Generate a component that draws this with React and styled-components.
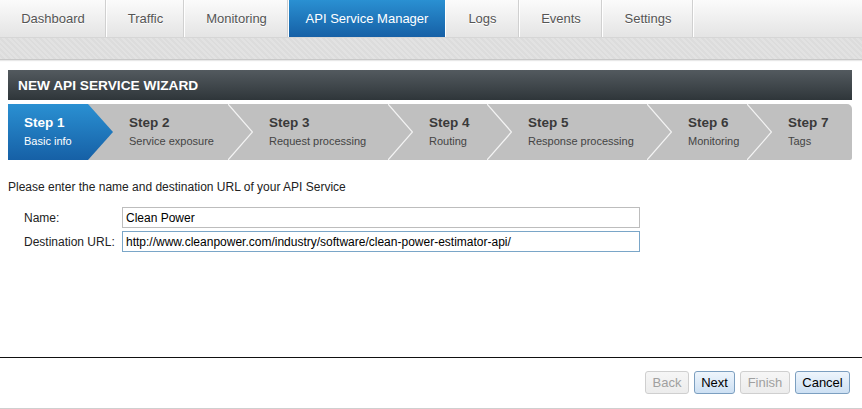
import React from "react";
import styled, { createGlobalStyle } from "styled-components";

const GlobalStyle = createGlobalStyle`
  html, body { margin: 0; padding: 0; background: #fff; }
  body { font-family: "Liberation Sans", Arial, sans-serif; font-size: 12px; color: #222; }
`;

const tabs = [
    { label: "Dashboard", width: 107 },
    { label: "Traffic", width: 78 },
    { label: "Monitoring", width: 104 },
    { label: "API Service Manager", width: 157 },
    { label: "Logs", width: 74 },
    { label: "Events", width: 83 },
    { label: "Settings", width: 91 },
];

const steps = [
    { title: "Step 1", sub: "Basic info", width: 105 },
    { title: "Step 2", sub: "Service exposure", width: 140 },
    { title: "Step 3", sub: "Request processing", width: 160 },
    { title: "Step 4", sub: "Routing", width: 99 },
    { title: "Step 5", sub: "Response processing", width: 160 },
    { title: "Step 6", sub: "Monitoring", width: 100 },
    { title: "Step 7", sub: "Tags", width: 0 },
];

const buttons = [
    { label: "Back", disabled: true, width: 44 },
    { label: "Next", disabled: false, width: 41 },
    { label: "Finish", disabled: true, width: 50 },
    { label: "Cancel", disabled: false, width: 55 },
];

const Chevron = () => (
    <ChevronSvg viewBox="0 0 25 56" preserveAspectRatio="none">
        <polyline points="0,0 24.5,28 0,56" fill="none" stroke="#f4f4f4" strokeWidth="1.2" />
    </ChevronSvg>
);

const App = () => {
    return (
        <Page>
            <GlobalStyle />
            <TabBar>
                {tabs.map((t) => (
                    <Tab key={t.label} w={t.width} active={t.label === "API Service Manager"}>{t.label}</Tab>
                ))}
                <TabFill />
            </TabBar>
            <Band />
            <Main>
                <WizardHeader>NEW API SERVICE WIZARD</WizardHeader>
                <Steps>
                    {steps.map((s, i) => (
                        <Step key={s.title} active={i === 0} w={s.width}>
                            <StepTitle active={i === 0}>{s.title}</StepTitle>
                            <StepSub active={i === 0}>{s.sub}</StepSub>
                            {i > 0 && i < steps.length - 1 && <Chevron />}
                        </Step>
                    ))}
                </Steps>
                <Intro>Please enter the name and destination URL of your API Service</Intro>
                <Form>
                    <Label>Name:</Label>
                    <Field defaultValue="Clean Power" />
                    <Label>Destination URL:</Label>
                    <Field focused defaultValue="http://www.cleanpower.com/industry/software/clean-power-estimator-api/" />
                </Form>
            </Main>
            <Footer>
                {buttons.map((b) => (
                    <Button key={b.label} disabled={b.disabled} w={b.width}>{b.label}</Button>
                ))}
            </Footer>
        </Page>
    );
}

export default App;


const Page = styled.div`
    min-height:409px;
    display:flex;
    flex-direction:column;
`

const TabBar = styled.div`
    display:flex;
    height:38px;
    background:linear-gradient(#fbfbfb, #e4e4e4);
    border-bottom:1px solid #d6d6d6;
    box-sizing:border-box;
`

const Tab = styled.div`
    box-sizing:border-box;
    width:${p => p.w}px;
    display:flex;
    align-items:center;
    justify-content:center;
    font-size:13px;
    color:${p => p.active ? "#fff" : "#555"};
    text-shadow:${p => p.active ? "none" : "0 1px 0 #fff"};
    background:${p => p.active ? "linear-gradient(#2a90d2, #1660a6)" : "transparent"};
    border-right:1px solid #fff;
    box-shadow:${p => p.active ? "none" : "inset -1px 0 0 #d0d0d0"};
    white-space:nowrap;
`

const TabFill = styled.div`
    flex:1;
`

const Band = styled.div`
    height:21px;
    background:repeating-linear-gradient(45deg, #e2e2e2 0 2px, #dcdcdc 2px 4px);
    border-bottom:1px solid #c8c8c8;
    box-shadow:0 1px 1px #e8e8e8;
`

const Main = styled.div`
    flex:1;
    padding:10px 10px 0 8px;
`

const WizardHeader = styled.div`
    height:30px;
    display:flex;
    align-items:center;
    padding-left:10px;
    background:linear-gradient(#535a5f, #2f363a);
    color:#fff;
    font-weight:bold;
    font-size:13.7px;
`

const Steps = styled.div`
    margin-top:4px;
    height:56px;
    display:flex;
    background:#c0c0c0;
    border-top-right-radius:5px;
    border-bottom-right-radius:2px;
`

const Step = styled.div`
    position:relative;
    box-sizing:border-box;
    ${p => p.w ? `width:${p.w}px;` : "flex:1;"}
    display:flex;
    flex-direction:column;
    justify-content:center;
    padding-left:16px;
    padding-bottom:2px;
    background:${p => p.active ? "linear-gradient(#2a90d2, #1660a6)" : "transparent"};
    clip-path:${p => p.active ? "polygon(0 0, calc(100% - 25px) 0, 100% 50%, calc(100% - 25px) 100%, 0 100%)" : "none"};
`

const ChevronSvg = styled.svg`
    position:absolute;
    right:0;
    top:0;
    width:25px;
    height:100%;
`

const StepTitle = styled.div`
    font-size:13.5px;
    font-weight:bold;
    line-height:20px;
    color:${p => p.active ? "#fff" : "#3a3a3a"};
`

const StepSub = styled.div`
    font-size:11px;
    line-height:16px;
    color:${p => p.active ? "#fff" : "#444"};
    white-space:nowrap;
`

const Intro = styled.p`
    margin:20px 0 13px;
    font-size:12px;
    color:#222;
`

const Form = styled.div`
    display:grid;
    grid-template-columns:98px 518px;
    row-gap:3px;
    padding-left:16px;
    align-items:center;
`

const Label = styled.label`
    font-size:12px;
    color:#222;
`

const Field = styled.input`
    box-sizing:border-box;
    height:21px;
    padding:0 3px;
    font-family:"Liberation Sans", Arial, sans-serif;
    font-size:12px;
    color:#000;
    border:1px solid ${p => p.focused ? "#7aa6c8" : "#bdbdbd"};
    outline:none;
`

const Footer = styled.div`
    height:52px;
    box-sizing:border-box;
    border-top:1px solid #111;
    border-bottom:1px solid #cfcfcf;
    display:flex;
    justify-content:flex-end;
    align-items:flex-start;
    gap:5px;
    padding:13px 12px 0 0;
`

const Button = styled.button`
    box-sizing:border-box;
    width:${p => p.w}px;
    height:23px;
    padding:0;
    font-family:"Liberation Sans", Arial, sans-serif;
    font-size:13px;
    border-radius:3px;
    color:${p => p.disabled ? "#a0a0a0" : "#000"};
    background:${p => p.disabled ? "linear-gradient(#f6f6f6, #ececec)" : "linear-gradient(#eef5fc, #cde0f3)"};
    border:1px solid ${p => p.disabled ? "#cfcfcf" : "#7c9fc0"};
`
